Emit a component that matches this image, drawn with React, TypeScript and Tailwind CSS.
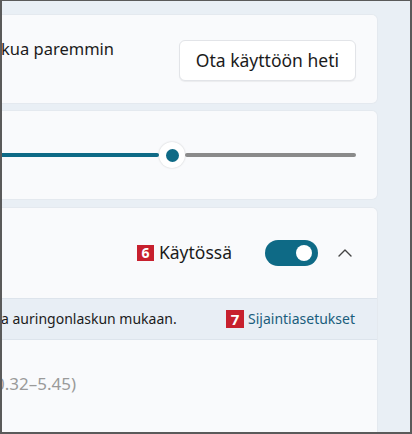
export default function App() {
  return (
    <div className="w-[412px] h-[434px] overflow-hidden border-l-2 border-r-2 border-t border-b-2 border-[#5a5a5a] bg-[#e9eff5] font-['Noto_Sans',sans-serif] text-[#1b1b1b]">
      <div className="flex flex-col gap-[6px] pt-[13px] w-[376px]">
        {/* card 1 */}
        <div className="h-[90px] rounded-r-md bg-[#f9fafc] border border-l-0 border-[#e4e9ef] flex items-start justify-between pr-[21px]">
          <span className="-ml-[1px] mt-[23px] text-[16.5px] leading-[22px] whitespace-nowrap">kua paremmin</span>
          <button className="mt-[25px] h-[41px] px-[16px] rounded-md bg-white border border-[#e2e4e8] shadow-[0_1px_1px_rgba(0,0,0,0.06)] text-[17.5px] leading-none text-[#1b1b1b]">
            Ota käyttöön heti
          </button>
        </div>

        {/* card 2: slider */}
        <div className="h-[90px] rounded-r-md bg-[#f9fafc] border border-l-0 border-[#e4e9ef] flex items-center pr-[21px]">
          <div className="flex items-center w-full">
            <div className="h-[4px] w-[157px] bg-[#0e6a86] rounded-r-full" />
            <div className="w-[26px] h-[26px] rounded-full bg-white shadow-[0_0_2px_rgba(0,0,0,0.2)] flex items-center justify-center shrink-0">
              <div className="w-[13px] h-[13px] rounded-full bg-[#0e6a86]" />
            </div>
            <div className="h-[4px] flex-1 bg-[#8a8a8a] rounded-full" />
          </div>
        </div>

        {/* card 3 */}
        <div className="mt-[1px] h-[260px] rounded-tr-md bg-[#f9fafc] border border-l-0 border-[#e4e9ef] flex flex-col">
          <div className="h-[90px] flex items-center justify-end pr-[24px]">
            <span className="w-[17px] h-[16px] bg-[#c7202e] text-white text-[14px] font-bold leading-none flex items-center justify-center">6</span>
            <span className="ml-[5px] text-[17.5px] leading-none">Käytössä</span>
            <div className="ml-[33px] w-[53px] h-[26px] rounded-full bg-[#0e6a86] flex items-center justify-end pr-[6px]">
              <div className="w-[16px] h-[16px] rounded-full bg-white" />
            </div>
            <svg className="ml-[19px]" width="16" height="10" viewBox="0 0 16 10" fill="none">
              <path d="M2 8 L8 2 L14 8" stroke="#444" strokeWidth="1.4" strokeLinecap="round" strokeLinejoin="round" />
            </svg>
          </div>
          <div className="h-[42px] bg-[#e8eef5] border-t border-b border-[#dde4ec] flex items-center justify-between pr-[22px]">
            <span className="-ml-[1px] text-[14px] leading-none whitespace-nowrap">a auringonlaskun mukaan.</span>
            <div className="flex items-center">
              <span className="w-[18px] h-[18px] bg-[#c7202e] text-white text-[15px] font-bold leading-none flex items-center justify-center">7</span>
              <span className="ml-[4px] text-[14px] leading-none text-[#1a5d7c]">Sijaintiasetukset</span>
            </div>
          </div>
          <div className="flex-1 pt-[35px]">
            <span className="-ml-[7px] block text-[17px] leading-none text-[#9a9a9a] whitespace-nowrap">0.32–5.45)</span>
          </div>
        </div>
      </div>
    </div>
  );
}
